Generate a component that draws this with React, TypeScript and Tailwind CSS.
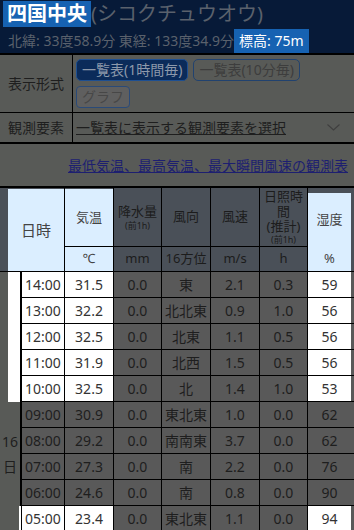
const rows: [string, string, string, string, string, string, string, boolean][] = [
  ["14:00", "31.5", "0.0", "東", "2.1", "0.3", "59", true],
  ["13:00", "32.2", "0.0", "北北東", "0.9", "1.0", "56", true],
  ["12:00", "32.5", "0.0", "北東", "1.1", "0.5", "56", true],
  ["11:00", "31.9", "0.0", "北西", "1.5", "0.5", "56", true],
  ["10:00", "32.5", "0.0", "北", "1.4", "1.0", "53", true],
  ["09:00", "30.9", "0.0", "東北東", "1.0", "0.0", "62", false],
  ["08:00", "29.2", "0.0", "南南東", "3.7", "0.0", "62", false],
  ["07:00", "27.3", "0.0", "南", "2.2", "0.0", "76", false],
  ["06:00", "24.6", "0.0", "南", "0.8", "0.0", "90", false],
  ["05:00", "23.4", "0.0", "東北東", "1.1", "0.0", "94", true],
];

function HeadCell({ children, className = "" }: { children: React.ReactNode; className?: string }) {
  return (
    <div className={`flex flex-col items-center justify-center border-r border-b border-black bg-[#4a5058] text-[13px] text-[#1c1c1c] ${className}`}>
      {children}
    </div>
  );
}

function DataCell({ children, white, className = "" }: { children: React.ReactNode; white?: boolean; className?: string }) {
  return (
    <div
      className={`flex shrink-0 items-center justify-center border-r border-black ${
        white ? "bg-white text-[#333]" : "bg-[#595959] text-[#1e1e1e]"
      } ${className}`}
    >
      {children}
    </div>
  );
}

export default function App() {
  return (
    <div className="h-[530px] w-[354px] overflow-hidden bg-[#585a57] font-['Noto_Sans','Noto_Sans_CJK_JP',sans-serif]">
      <header className="h-[53px] bg-[#071a38]">
        <div className="flex items-start pt-[1px] pl-[3px]">
          <span className="bg-[#1662b2] px-[4px] text-[20px] font-bold leading-[26px] text-white">四国中央</span>
          <span className="text-[20px] leading-[26px] text-[#5a616c]">(シコクチュウオウ)</span>
        </div>
        <div className="mt-[2px] flex items-center pl-[8px]">
          <span className="text-[14px] leading-[24px] text-[#5a616c]">北緯: 33度58.9分 東経: 133度34.9分</span>
          <span className="bg-[#1662b2] px-[5px] text-[14px] leading-[24px] text-white">標高: 75m</span>
        </div>
      </header>

      <div className="border-t-2 border-black">
        <div className="flex border-b border-black">
          <div className="flex w-[73px] shrink-0 items-center border-r border-black pl-[8px] text-[14px] text-[#1e1e1e]">
            表示形式
          </div>
          <div className="flex flex-wrap gap-x-[5px] gap-y-[5px] py-[4px] pl-[3px] pr-[4px]">
            <button className="h-[22px] rounded-[5px] border border-[#1d4f92] bg-[#0b2b5a] px-[5px] text-[14px] leading-[20px] text-[#8d99ab]">
              一覧表(1時間毎)
            </button>
            <button className="h-[22px] rounded-[5px] border border-[#21426f] px-[5px] text-[14px] leading-[20px] text-[#3d3d3d]">
              一覧表(10分毎)
            </button>
            <button className="h-[22px] rounded-[4px] border border-[#2a4a78] bg-[#5f5f5f] px-[5px] text-[14px] leading-[20px] text-[#474747]">
              グラフ
            </button>
          </div>
        </div>
        <div className="flex h-[31px] border-b-2 border-black">
          <div className="flex w-[73px] shrink-0 items-center border-r border-black pl-[8px] text-[14px] text-[#1e1e1e]">
            観測要素
          </div>
          <div className="flex flex-1 items-center justify-between pl-[3px] pr-[14px]">
            <span className="text-[14px] text-[#1e1e1e] underline">一覧表に表示する観測要素を選択</span>
            <svg width="13" height="7" viewBox="0 0 13 7" fill="none">
              <polyline points="0.5,0.5 6.5,6 12.5,0.5" stroke="#3f3f3f" strokeWidth="1.1" />
            </svg>
          </div>
        </div>
      </div>

      <div className="flex h-[42px] items-center justify-end pr-[6px]">
        <span className="text-[14px] text-[#1d1f70] underline">最低気温、最高気温、最大瞬間風速の観測表</span>
      </div>

      <div className="border-t-2 border-black">
        <div className="grid grid-cols-[22px_43px_49px_48px_49px_49px_48px_46px] grid-rows-[59px_25px]">
          <div className="col-span-2 row-span-2 border-r border-b border-black bg-[#4a5058] pt-[1px] pl-[8px]">
            <div className="flex h-full items-center justify-center bg-[#dbeeff] text-[15px] text-[#444]">日時</div>
          </div>
          <div className="border-r border-b border-black bg-[#4a5058] pt-[1px]">
            <div className="flex h-full items-center justify-center bg-[#dbeeff] text-[13px] text-[#444]">気温</div>
          </div>
          <HeadCell>
            <span className="leading-[17px]">降水量</span>
            <span className="text-[9px] leading-[12px]">(前1h)</span>
          </HeadCell>
          <HeadCell>風向</HeadCell>
          <HeadCell>風速</HeadCell>
          <HeadCell className="leading-[15px]">
            <span>日照時</span>
            <span>間</span>
            <span>(推計)</span>
            <span className="text-[9px] leading-[11px]">(前1h)</span>
          </HeadCell>
          <div className="row-span-2 border-b border-black bg-[#4a5058] pt-[5px] pr-[3px]">
            <div className="flex h-full flex-col bg-[#dbeeff] text-[13px] text-[#444]">
              <div className="flex flex-1 items-center justify-center">湿度</div>
              <div className="flex h-[24px] items-center justify-center">%</div>
            </div>
          </div>
          <div className="flex items-center justify-center border-r border-b border-black bg-[#dbeeff] text-[13px] text-[#444]">
            ℃
          </div>
          <HeadCell>mm</HeadCell>
          <HeadCell>16方位</HeadCell>
          <HeadCell>m/s</HeadCell>
          <HeadCell>h</HeadCell>
        </div>

        <div className="flex">
          <div className="flex w-[22px] shrink-0 flex-col">
            <div className="flex h-[130px]">
              <div className="w-[8px] bg-[#585a57]" />
              <div className="w-[12px] bg-white" />
              <div className="w-[2px] bg-black" />
            </div>
            <div className="flex h-[104px]">
              <div className="flex flex-1 flex-col items-center justify-center bg-[#585a57] text-[14px] leading-[25px] text-[#1e1e1e]">
                <span>16</span>
                <span>日</span>
              </div>
              <div className="w-[2px] bg-black" />
            </div>
            <div className="flex h-[26px]">
              <div className="w-[19px] bg-[#585a57]" />
              <div className="w-[2px] bg-white" />
              <div className="w-[1px] bg-black" />
            </div>
          </div>

          <div className="flex-1 text-[14px]">
            {rows.map(([time, temp, rain, dir, speed, sun, hum, hl]) => (
              <div key={time} className="flex h-[26px] border-b border-black">
                <DataCell white={hl} className="w-[43px]">{time}</DataCell>
                <DataCell white={hl} className="w-[49px]">{temp}</DataCell>
                <DataCell className="w-[48px]">{rain}</DataCell>
                <DataCell className="w-[49px]">{dir}</DataCell>
                <DataCell className="w-[49px]">{speed}</DataCell>
                <DataCell className="w-[48px]">{sun}</DataCell>
                <div className="flex flex-1 bg-[#595959]">
                  <div
                    className={`flex w-[43px] items-center justify-center ${
                      hl ? "bg-white text-[#333]" : "text-[#1e1e1e]"
                    }`}
                  >
                    {hum}
                  </div>
                </div>
              </div>
            ))}
          </div>
        </div>
      </div>
    </div>
  );
}
